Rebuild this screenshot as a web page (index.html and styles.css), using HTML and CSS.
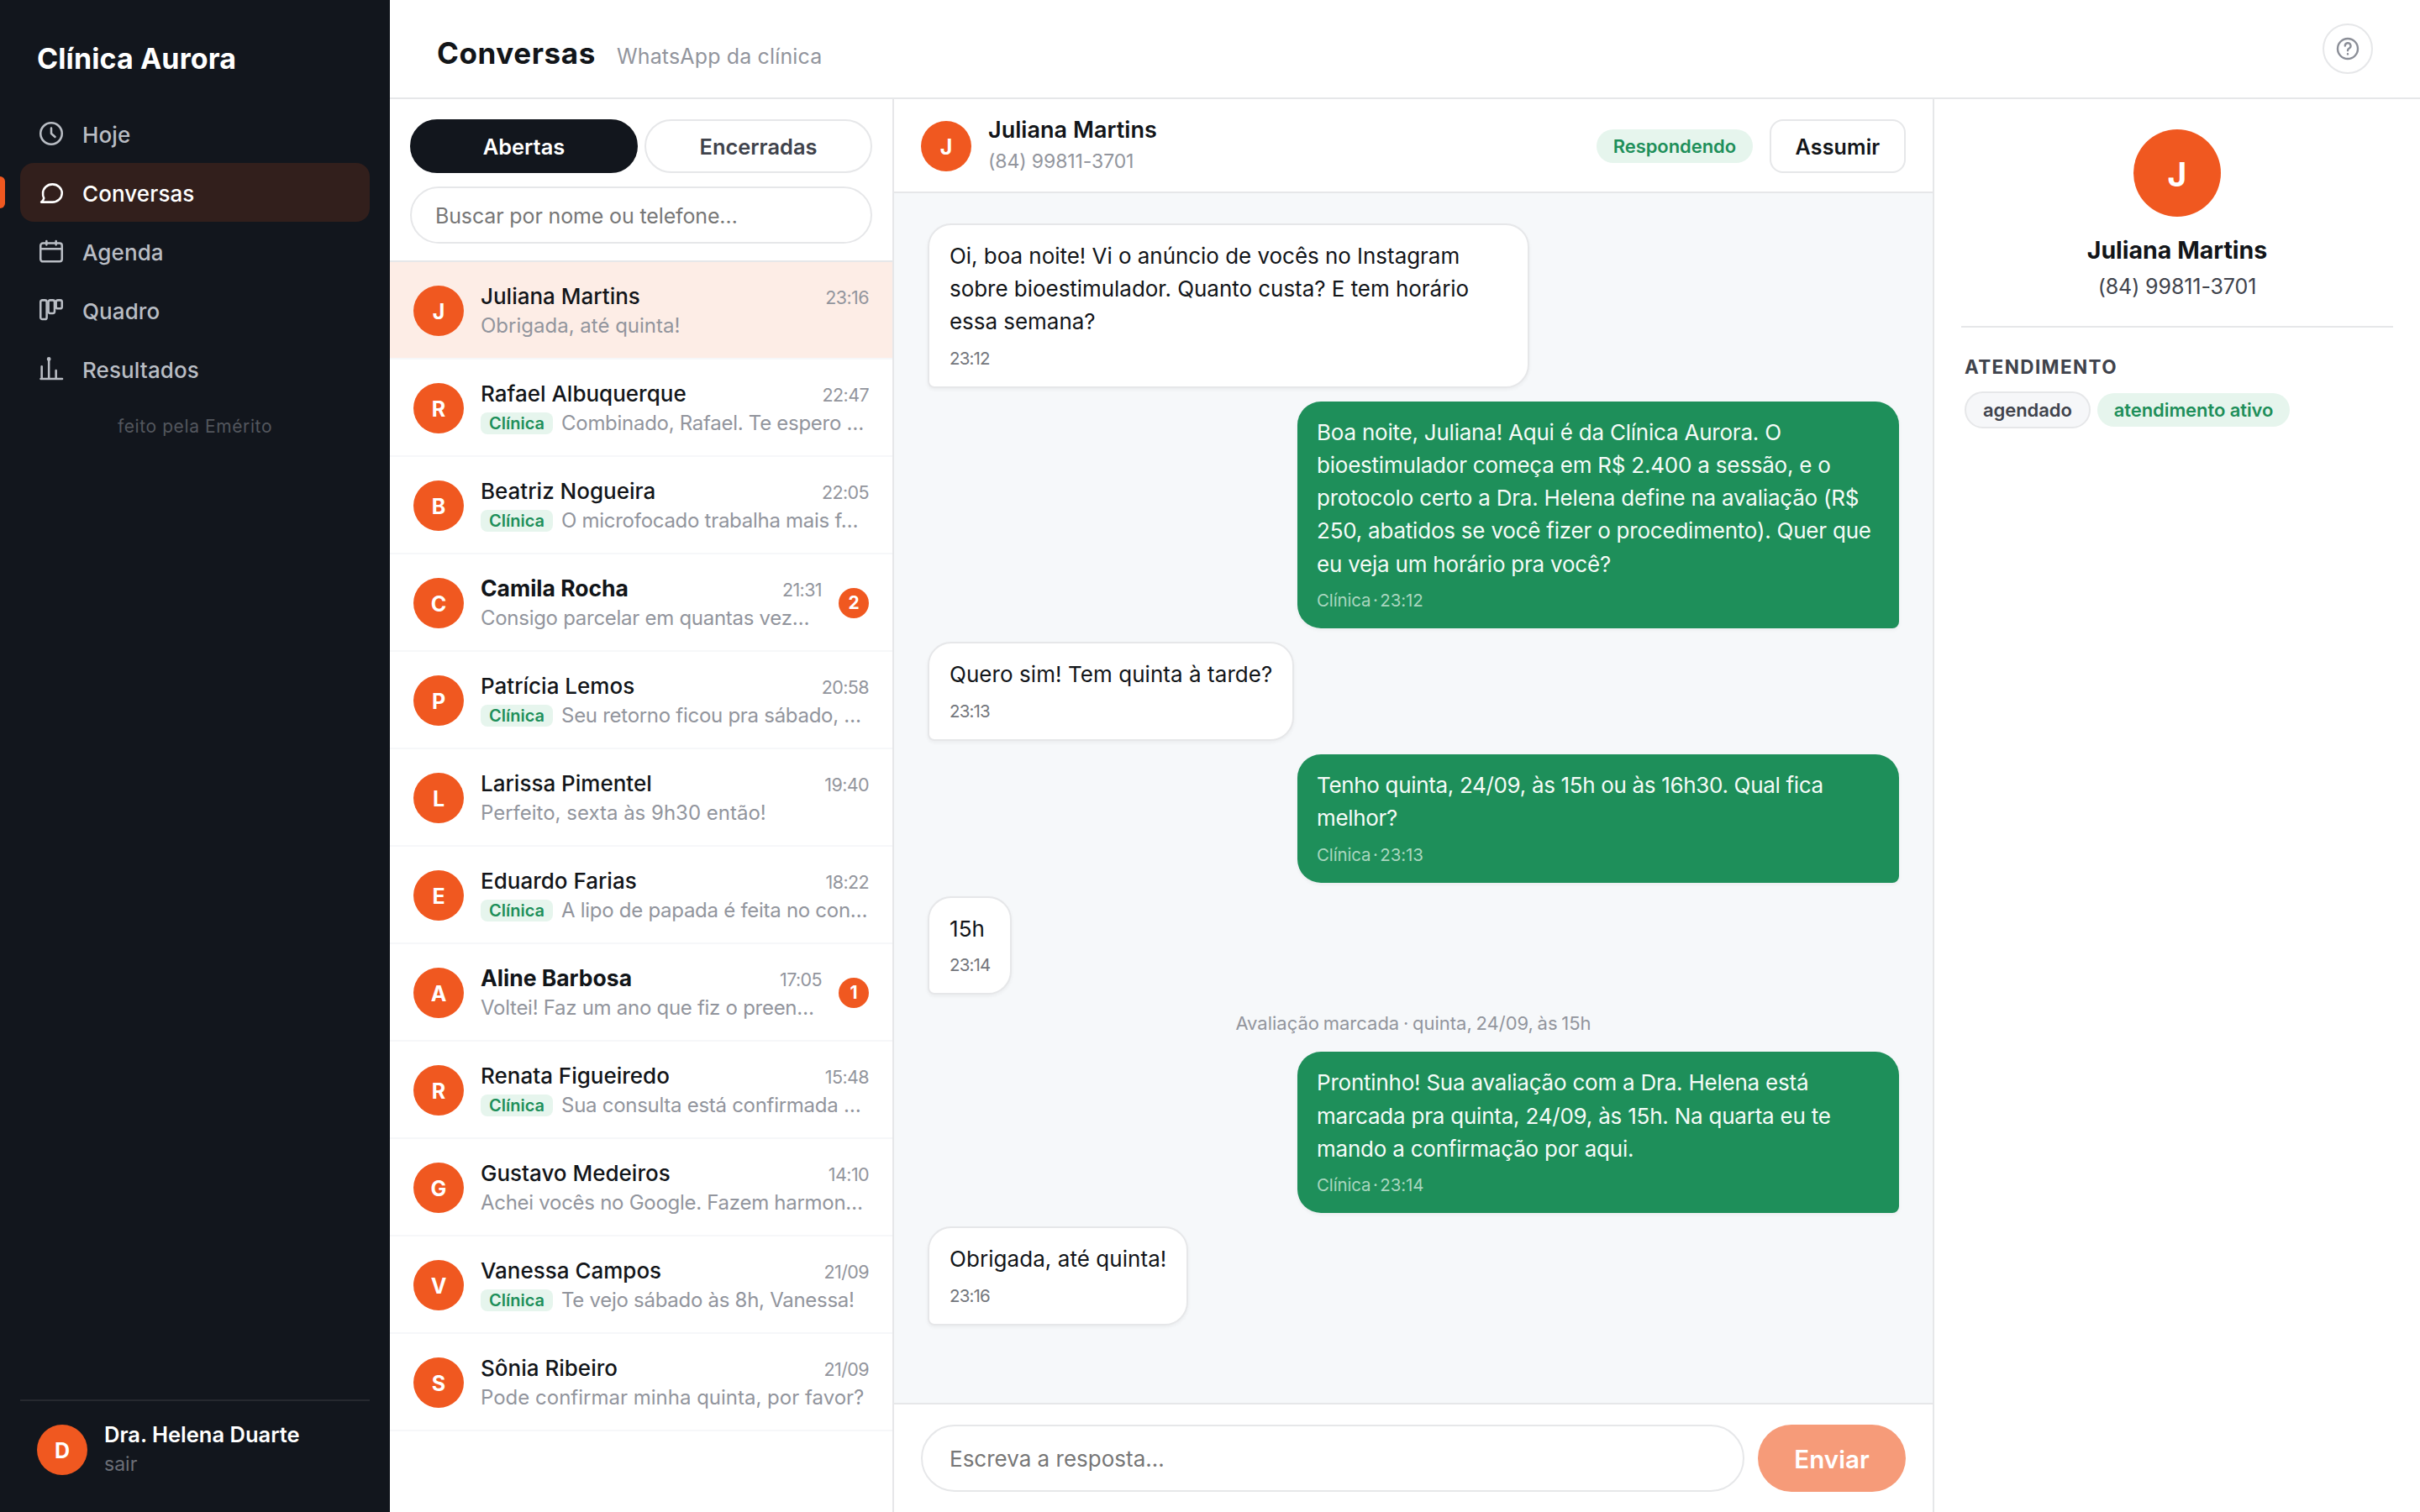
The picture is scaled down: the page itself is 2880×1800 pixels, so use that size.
FILE: index.html
```html
<!DOCTYPE html>
<html lang="pt-BR">
<head>
<meta charset="utf-8">
<title>Conversas · Clínica Aurora</title>
<link rel="stylesheet" href="styles.css">
</head>
<body>
<div class="app">
  <aside class="sidebar">
    <div class="brand">Clínica Aurora</div>
    <nav class="nav">
      <a class="nav-item"><svg class="icon" viewBox="0 0 24 24"><circle cx="12" cy="12" r="9"/><path d="M12 7.5V12l3.2 2.8"/></svg>Hoje</a>
      <a class="nav-item active"><svg class="icon" viewBox="0 0 24 24"><path d="M21 12.7a8 7.5 0 0 1-8 7.5H3.6c1.2-.8 1.9-1.8 2.2-3.3A7.4 7.4 0 0 1 5 12.7a8 7.5 0 0 1 16 0Z"/></svg>Conversas</a>
      <a class="nav-item"><svg class="icon" viewBox="0 0 24 24"><rect x="3" y="5.3" width="18" height="15.4" rx="2"/><path d="M3 10h18M8 3.6v3M16 3.6v3"/></svg>Agenda</a>
      <a class="nav-item"><svg class="icon" viewBox="0 0 24 24"><rect x="3" y="3.8" width="5.2" height="16" rx="1.5"/><rect x="9.6" y="3.8" width="5.2" height="11" rx="1.5"/><rect x="16" y="3.8" width="5" height="7" rx="1.5"/></svg>Quadro</a>
      <a class="nav-item"><svg class="icon" viewBox="0 0 24 24"><path d="M3.2 20.5h18M4 20.5V10M10 20.5V4M16 20.5v-7"/><circle cx="10" cy="3.8" r=".8"/></svg>Resultados</a>
    </nav>
    <div class="credit">feito pela Emérito</div>
    <div class="user">
      <span class="avatar">D</span>
      <div><div class="user-name">Dra. Helena Duarte</div><div class="user-exit">sair</div></div>
    </div>
  </aside>

  <div class="main">
    <header class="topbar">
      <div class="heading"><h1>Conversas</h1><span>WhatsApp da clínica</span></div>
      <button class="help"><svg class="icon" viewBox="0 0 24 24"><circle cx="12" cy="12" r="9"/><path d="M9.6 9.4a2.5 2.5 0 1 1 3.7 2.2c-.9.5-1.3 1-1.3 2M12 16.6v.2"/></svg></button>
    </header>

    <div class="columns">
      <section class="inbox">
        <div class="filters">
          <div class="tabs"><button class="tab on">Abertas</button><button class="tab">Encerradas</button></div>
          <div class="search">Buscar por nome ou telefone…</div>
        </div>
        <div class="row selected"><span class="avatar">J</span><div class="info"><div class="line"><b>Juliana Martins</b><time>23:16</time></div><div class="preview">Obrigada, até quinta!</div></div></div>
        <div class="row"><span class="avatar">R</span><div class="info"><div class="line"><b>Rafael Albuquerque</b><time>22:47</time></div><div class="preview cut"><i>Clínica</i>Combinado, Rafael. Te espero …</div></div></div>
        <div class="row"><span class="avatar">B</span><div class="info"><div class="line"><b>Beatriz Nogueira</b><time>22:05</time></div><div class="preview cut"><i>Clínica</i>O microfocado trabalha mais f…</div></div></div>
        <div class="row unread"><span class="avatar">C</span><div class="info"><div class="line"><b>Camila Rocha</b><time>21:31</time></div><div class="preview cut">Consigo parcelar em quantas vez…</div></div><span class="count">2</span></div>
        <div class="row"><span class="avatar">P</span><div class="info"><div class="line"><b>Patrícia Lemos</b><time>20:58</time></div><div class="preview cut"><i>Clínica</i>Seu retorno ficou pra sábado, …</div></div></div>
        <div class="row"><span class="avatar">L</span><div class="info"><div class="line"><b>Larissa Pimentel</b><time>19:40</time></div><div class="preview">Perfeito, sexta às 9h30 então!</div></div></div>
        <div class="row"><span class="avatar">E</span><div class="info"><div class="line"><b>Eduardo Farias</b><time>18:22</time></div><div class="preview cut"><i>Clínica</i>A lipo de papada é feita no con…</div></div></div>
        <div class="row unread"><span class="avatar">A</span><div class="info"><div class="line"><b>Aline Barbosa</b><time>17:05</time></div><div class="preview cut">Voltei! Faz um ano que fiz o preen…</div></div><span class="count">1</span></div>
        <div class="row"><span class="avatar">R</span><div class="info"><div class="line"><b>Renata Figueiredo</b><time>15:48</time></div><div class="preview cut"><i>Clínica</i>Sua consulta está confirmada …</div></div></div>
        <div class="row"><span class="avatar">G</span><div class="info"><div class="line"><b>Gustavo Medeiros</b><time>14:10</time></div><div class="preview cut">Achei vocês no Google. Fazem harmon…</div></div></div>
        <div class="row"><span class="avatar">V</span><div class="info"><div class="line"><b>Vanessa Campos</b><time>21/09</time></div><div class="preview cut"><i>Clínica</i>Te vejo sábado às 8h, Vanessa!</div></div></div>
        <div class="row"><span class="avatar">S</span><div class="info"><div class="line"><b>Sônia Ribeiro</b><time>21/09</time></div><div class="preview">Pode confirmar minha quinta, por favor?</div></div></div>
      </section>

      <section class="chat">
        <div class="chat-head">
          <span class="avatar">J</span>
          <div class="who"><div class="who-name">Juliana Martins</div><div class="who-phone">(84) 99811-3701</div></div>
          <span class="pill green">Respondendo</span>
          <button class="take">Assumir</button>
        </div>
        <div class="messages">
          <div class="msg in">Oi, boa noite! Vi o anúncio de vocês no Instagram<br>sobre bioestimulador. Quanto custa? E tem horário<br>essa semana?<small>23:12</small></div>
          <div class="msg out">Boa noite, Juliana! Aqui é da Clínica Aurora. O<br>bioestimulador começa em R$ 2.400 a sessão, e o<br>protocolo certo a Dra. Helena define na avaliação (R$<br>250, abatidos se você fizer o procedimento). Quer que<br>eu veja um horário pra você?<small>Clínica · 23:12</small></div>
          <div class="msg in">Quero sim! Tem quinta à tarde?<small>23:13</small></div>
          <div class="msg out tight">Tenho quinta, 24/09, às 15h ou às 16h30. Qual fica<br>melhor?<small>Clínica · 23:13</small></div>
          <div class="msg in">15h<small>23:14</small></div>
          <div class="event">Avaliação marcada · quinta, 24/09, às 15h</div>
          <div class="msg out">Prontinho! Sua avaliação com a Dra. Helena está<br>marcada pra quinta, 24/09, às 15h. Na quarta eu te<br>mando a confirmação por aqui.<small>Clínica · 23:14</small></div>
          <div class="msg in">Obrigada, até quinta!<small>23:16</small></div>
        </div>
        <div class="composer"><div class="reply">Escreva a resposta…</div><button class="send">Enviar</button></div>
      </section>

      <aside class="contact">
        <div class="profile">
          <span class="avatar large">J</span>
          <div class="profile-name">Juliana Martins</div>
          <div class="profile-phone">(84) 99811-3701</div>
        </div>
        <div class="status">
          <h2>ATENDIMENTO</h2>
          <div class="tags"><span class="pill outline">agendado</span><span class="pill green">atendimento ativo</span></div>
        </div>
      </aside>
    </div>
  </div>
</div>
</body>
</html>
```
FILE: styles.css
```css
* { box-sizing: border-box; }

:root {
  --ink: #121519;
  --dark: #12161d;
  --orange: #f05820;
  --green: #1e8f5a;
  --mint: #e6f5ed;
  --line: #e6e7e9;
  --muted: #92959d;
  --slate: #40434c;
}

body {
  margin: 0;
  font-family: Inter, "Liberation Sans", sans-serif;
  font-size: 26px;
  color: var(--ink);
  background: #fff;
}

button { font-family: inherit; padding: 0; border: 0; background: none; }

.app { display: flex; width: 2880px; height: 1800px; overflow: hidden; }

.icon {
  width: 34px;
  height: 34px;
  flex: none;
  fill: none;
  stroke: currentColor;
  stroke-width: 1.8;
  stroke-linecap: round;
  stroke-linejoin: round;
}

.avatar {
  display: flex;
  align-items: center;
  justify-content: center;
  flex: none;
  width: 60px;
  height: 60px;
  padding-top: 2px;
  border-radius: 50%;
  background: var(--orange);
  color: #fff;
  font-size: 25px;
  font-weight: 700;
}

/* Sidebar */
.sidebar {
  display: flex;
  flex-direction: column;
  flex: none;
  width: 464px;
  padding: 0 24px 16px;
  background: var(--dark);
}
.brand {
  height: 124px;
  padding: 45px 20px 0;
  color: #fff;
  font-size: 34px;
  line-height: 50px;
  font-weight: 700;
  letter-spacing: .1px;
}
.nav-item {
  position: relative;
  display: flex;
  align-items: center;
  gap: 20px;
  height: 70px;
  padding: 2px 20px 0;
  border-radius: 16px;
  color: #b9bdc4;
  font-weight: 500;
  letter-spacing: .1px;
}
.nav-item .icon { margin-top: -2px; }
.nav-item.active { background: #321f1c; color: #fff; }
.nav-item.active::before {
  content: "";
  position: absolute;
  left: -24px;
  top: 16px;
  width: 6px;
  height: 38px;
  border-radius: 0 6px 6px 0;
  background: var(--orange);
}
.credit {
  padding-top: 18px;
  text-align: center;
  color: #53565d;
  font-size: 21px;
  line-height: 32px;
  letter-spacing: .6px;
}
.user {
  display: flex;
  align-items: center;
  gap: 20px;
  margin-top: auto;
  height: 118px;
  padding: 0 20px;
  border-top: 2px solid #26292f;
}
.user-name { color: #fff; font-size: 25.5px; line-height: 34px; font-weight: 600; }
.user-exit { color: #6b6e76; font-size: 23px; line-height: 36px; }

/* Top bar */
.main { flex: 1; display: flex; flex-direction: column; min-width: 0; }
.topbar {
  display: flex;
  align-items: center;
  justify-content: space-between;
  flex: none;
  height: 118px;
  padding: 0 56px;
  border-bottom: 2px solid var(--line);
}
.heading { display: flex; align-items: baseline; gap: 25px; padding-top: 10px; }
.heading h1 { margin: 0; font-size: 35px; font-weight: 700; letter-spacing: .6px; }
.heading span { font-size: 25px; color: var(--muted); letter-spacing: .15px; }
.help {
  display: flex;
  align-items: center;
  justify-content: center;
  width: 60px;
  height: 60px;
  border: 2px solid var(--line);
  border-radius: 50%;
  color: #8b8e97;
}
.help .icon { width: 32px; height: 32px; }

.columns { flex: 1; display: flex; min-height: 0; }

/* Inbox */
.inbox { flex: none; width: 600px; border-right: 2px solid var(--line); }
.filters {
  display: flex;
  flex-direction: column;
  gap: 16px;
  padding: 24px 24px 20px;
  border-bottom: 2px solid var(--line);
}
.tabs { display: flex; gap: 8px; }
.tab {
  flex: 1;
  height: 64px;
  border: 2px solid var(--line);
  border-radius: 32px;
  color: var(--slate);
  font-size: 25.4px;
  font-weight: 600;
}
.tab.on { background: var(--dark); border-color: var(--dark); color: #fff; }
.search {
  height: 68px;
  padding: 0 28px;
  border: 2px solid var(--line);
  border-radius: 34px;
  color: #777;
  font-size: 25px;
  line-height: 66px;
  letter-spacing: -.14px;
}
.row {
  display: flex;
  align-items: center;
  gap: 20px;
  height: 116px;
  padding: 2px 28px 0;
  border-bottom: 2px solid #f6f7f9;
}
.row.selected { background: #fdede6; }
.info { flex: 1; min-width: 0; }
.line { display: flex; align-items: baseline; justify-content: space-between; line-height: 34px; }
.line b { font-weight: 500; }
.unread .line b { font-weight: 700; font-size: 26.5px; }
.line time { color: var(--muted); font-size: 21.5px; letter-spacing: -.6px; }
.preview {
  display: flex;
  align-items: center;
  gap: 10px;
  color: var(--muted);
  font-size: 24px;
  line-height: 34px;
  white-space: nowrap;
}
.preview.cut { letter-spacing: -.28px; }
.preview i {
  padding: 0 10px;
  border-radius: 8px;
  background: var(--mint);
  color: var(--green);
  font-size: 20px;
  line-height: 26px;
  font-style: normal;
  font-weight: 600;
  letter-spacing: 0;
}
.count {
  width: 36px;
  height: 36px;
  border-radius: 18px;
  background: var(--orange);
  color: #fff;
  font-size: 21px;
  line-height: 36px;
  font-weight: 700;
  text-align: center;
}

/* Conversation */
.chat { flex: 1; display: flex; flex-direction: column; min-width: 0; }
.chat-head {
  display: flex;
  align-items: center;
  gap: 20px;
  flex: none;
  height: 112px;
  padding: 2px 32px 0;
  border-bottom: 2px solid var(--line);
}
.who { flex: 1; }
.who-name { font-size: 27px; line-height: 36px; font-weight: 600; letter-spacing: .04px; }
.who-phone { color: var(--muted); font-size: 23px; line-height: 39px; letter-spacing: -.1px; }
.pill {
  padding: 0 20px;
  border-radius: 22px;
  font-size: 22px;
  line-height: 40px;
  font-weight: 600;
  letter-spacing: -.08px;
}
.pill.green { background: var(--mint); color: var(--green); }
.pill.outline { border: 2px solid var(--line); background: #f6f7f9; color: var(--slate); }
.take {
  width: 162px;
  height: 64px;
  padding-top: 1px;
  border: 2px solid var(--line);
  border-radius: 16px;
  color: var(--ink);
  font-size: 25px;
  font-weight: 600;
  letter-spacing: .15px;
}
.messages {
  flex: 1;
  display: flex;
  flex-direction: column;
  align-items: flex-start;
  gap: 16px;
  padding: 36px 40px;
  background: #f6f8fa;
}
.msg {
  max-width: 716px;
  padding: 17px 24px 18px;
  border-radius: 28px;
  font-size: 26px;
  line-height: 39.15px;
  letter-spacing: .06px;
  white-space: nowrap;
  box-shadow: 0 2px 4px rgba(18, 22, 29, .05);
}
.msg.in { border: 2px solid var(--line); border-bottom-left-radius: 8px; background: #fff; }
.msg.in:first-child, .msg.out { width: 716px; }
.msg.in:first-child { letter-spacing: -.04px; }
.msg.out {
  align-self: flex-end;
  padding-left: 23px;
  border-bottom-right-radius: 8px;
  background: var(--green);
  color: #f4fbf7;
  letter-spacing: -.22px;
}
.msg.out.tight { letter-spacing: -.33px; }
.msg small {
  display: block;
  margin-top: 8.5px;
  color: #73767c;
  font-size: 20.5px;
  line-height: 31px;
  letter-spacing: -.85px;
}
.msg.out small { color: #a9d6bf; letter-spacing: -.15px; word-spacing: -3px; }
.event {
  align-self: center;
  color: var(--muted);
  font-size: 22px;
  line-height: 36px;
  word-spacing: -1.5px;
}
.composer {
  display: flex;
  gap: 16px;
  flex: none;
  height: 130px;
  padding: 24px 32px;
  border-top: 2px solid var(--line);
}
.reply {
  flex: 1;
  padding: 0 32px;
  border: 2px solid var(--line);
  border-radius: 40px;
  color: #777;
  line-height: 77px;
}
.send {
  width: 176px;
  padding-top: 2px;
  border-radius: 40px;
  background: #f69b79;
  color: #fff;
  font-size: 29.6px;
  font-weight: 600;
}

/* Contact panel */
.contact { flex: none; width: 580px; padding: 36px 32px; border-left: 2px solid var(--line); }
.profile {
  display: flex;
  flex-direction: column;
  align-items: center;
  height: 236px;
  border-bottom: 2px solid var(--line);
}
.avatar.large { width: 104px; height: 104px; font-size: 39px; }
.profile-name { margin-top: 19px; font-size: 28.5px; line-height: 42px; font-weight: 700; }
.profile-phone { margin-top: 1px; color: var(--slate); font-size: 25px; line-height: 42px; letter-spacing: -.1px; }
.status { padding: 31px 4px 0; }
.status h2 {
  margin: 0 0 13px;
  color: var(--slate);
  font-size: 22.5px;
  line-height: 32px;
  font-weight: 700;
  letter-spacing: 1.4px;
}
.tags { display: flex; align-items: center; gap: 8px; }
```
